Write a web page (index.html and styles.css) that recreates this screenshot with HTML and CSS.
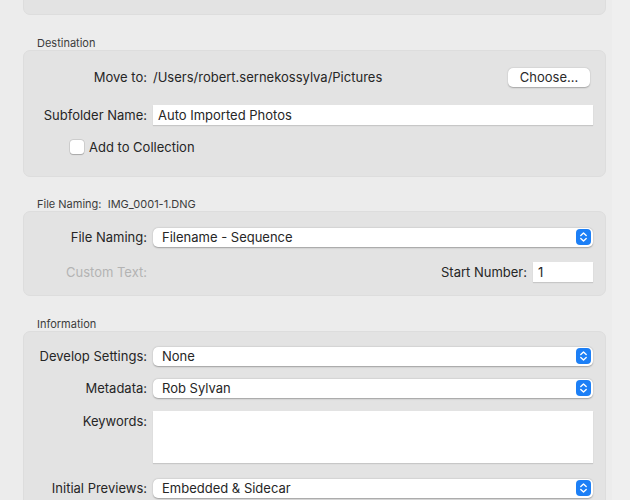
FILE: index.html
```html
<!DOCTYPE html>
<html>
<head>
<meta charset="utf-8">
<link rel="stylesheet" href="styles.css">
</head>
<body>
<div class="page">
  <div class="column">
    <div class="panel panel-top"></div>

    <div class="section-title">Destination</div>
    <div class="panel panel-dest">
      <div class="row">
        <div class="label">Move to:</div>
        <div class="field-text">/Users/robert.sernekossylva/Pictures</div>
        <button class="btn">Choose...</button>
      </div>
      <div class="row gap18">
        <div class="label">Subfolder Name:</div>
        <div class="input">Auto Imported Photos</div>
      </div>
      <div class="row gap12 check-row">
        <span class="checkbox"></span>
        <span class="check-label">Add to Collection</span>
      </div>
    </div>

    <div class="section-title title-tight">File Naming:&nbsp; IMG_0001-1.DNG</div>
    <div class="panel panel-fn">
      <div class="row">
        <div class="label">File Naming:</div>
        <div class="select"><span>Filename - Sequence</span><svg class="stepper" viewBox="0 0 15 16"><rect x="0" y="0" width="15" height="16" rx="4" fill="#1c7ff6"/><path d="M4.8 6.4 L7.5 3.9 L10.2 6.4 M4.8 9.6 L7.5 12.1 L10.2 9.6" fill="none" stroke="#fff" stroke-width="1.4" stroke-linecap="round" stroke-linejoin="round"/></svg></div>
      </div>
      <div class="row gap15">
        <div class="label disabled">Custom Text:</div>
        <div class="spacer"></div>
        <div class="label-inline">Start Number:</div>
        <div class="input small">1</div>
      </div>
    </div>

    <div class="section-title">Information</div>
    <div class="panel panel-info">
      <div class="row">
        <div class="label">Develop Settings:</div>
        <div class="select"><span>None</span><svg class="stepper" viewBox="0 0 15 16"><rect x="0" y="0" width="15" height="16" rx="4" fill="#1c7ff6"/><path d="M4.8 6.4 L7.5 3.9 L10.2 6.4 M4.8 9.6 L7.5 12.1 L10.2 9.6" fill="none" stroke="#fff" stroke-width="1.4" stroke-linecap="round" stroke-linejoin="round"/></svg></div>
      </div>
      <div class="row gap12">
        <div class="label">Metadata:</div>
        <div class="select"><span>Rob Sylvan</span><svg class="stepper" viewBox="0 0 15 16"><rect x="0" y="0" width="15" height="16" rx="4" fill="#1c7ff6"/><path d="M4.8 6.4 L7.5 3.9 L10.2 6.4 M4.8 9.6 L7.5 12.1 L10.2 9.6" fill="none" stroke="#fff" stroke-width="1.4" stroke-linecap="round" stroke-linejoin="round"/></svg></div>
      </div>
      <div class="row gap13 top-row">
        <div class="label label-top">Keywords:</div>
        <div class="textarea"></div>
      </div>
      <div class="row gap15">
        <div class="label">Initial Previews:</div>
        <div class="select"><span>Embedded &amp; Sidecar</span><svg class="stepper" viewBox="0 0 15 16"><rect x="0" y="0" width="15" height="16" rx="4" fill="#1c7ff6"/><path d="M4.8 6.4 L7.5 3.9 L10.2 6.4 M4.8 9.6 L7.5 12.1 L10.2 9.6" fill="none" stroke="#fff" stroke-width="1.4" stroke-linecap="round" stroke-linejoin="round"/></svg></div>
      </div>
    </div>
  </div>
  <div class="strip"></div>
</div>
</body>
</html>
```
FILE: styles.css
```css
html, body {
  margin: 0;
  padding: 0;
  height: 100%;
  overflow: hidden;
}
body {
  background: #ececec;
  font-family: Inter, "Noto Sans", "Liberation Sans", sans-serif;
  font-size: 13px;
  color: #262626;
}
.page {
  display: flex;
  height: 500px;
}
.column {
  width: 583px;
  padding-left: 23px;
  padding-right: 6px;
  flex: none;
}
.strip {
  flex: 1;
  background: #efefef;
}
.panel {
  background: #e3e3e3;
  border: 1px solid #dddddd;
  border-radius: 7px;
  box-sizing: border-box;
  padding: 0 12px 0 0;
}
.panel-top {
  height: 25px;
  margin-top: -10px;
}
.panel-dest {
  height: 127px;
  padding-top: 16px;
}
.panel-fn {
  height: 85px;
  padding-top: 15px;
}
.panel-info {
  height: 200px;
  padding-top: 14px;
}
.section-title {
  margin-top: 21px;
  padding-left: 14px;
  height: 14px;
  line-height: 14px;
  font-size: 11px;
  color: #3c3c3c;
}
.section-title.title-tight {
  margin-top: 20px;
}
.row {
  display: flex;
  align-items: center;
  height: 20px;
}
.gap12 { margin-top: 12px; }
.gap13 { margin-top: 13px; }
.gap15 { margin-top: 15px; }
.gap18 { margin-top: 18px; }
.label {
  width: 123px;
  flex: none;
  text-align: right;
  margin-right: 6px;
  white-space: nowrap;
}
.label.disabled {
  color: #b3b3b3;
}
.label-inline {
  margin-right: 6px;
  white-space: nowrap;
}
.spacer { flex: 1; }
.field-text {
  flex: 1;
  white-space: nowrap;
}
.btn {
  font-family: inherit;
  font-size: 13px;
  color: #2a2a2a;
  background: #ffffff;
  border: none;
  border-radius: 5px;
  box-shadow: 0 0.5px 1.5px rgba(0,0,0,0.28);
  width: 82px;
  height: 19px;
  padding: 0;
  margin-right: 3px;
  line-height: 19px;
}
.input {
  flex: 1;
  height: 20px;
  background: #ffffff;
  box-shadow: 0 1px 1px rgba(0,0,0,0.12);
  line-height: 20px;
  padding-left: 5px;
  box-sizing: border-box;
  white-space: nowrap;
}
.input.small {
  flex: none;
  width: 60px;
}
.check-row {
  padding-left: 46px;
}
.checkbox {
  width: 14px;
  height: 14px;
  border-radius: 3px;
  background: #ffffff;
  box-shadow: 0 0 0 0.5px rgba(0,0,0,0.15), 0 0.5px 1px rgba(0,0,0,0.2);
  margin-right: 5px;
  flex: none;
}
.select {
  flex: 1;
  height: 19px;
  background: #ffffff;
  border-radius: 5px;
  box-shadow: 0 0.5px 1.5px rgba(0,0,0,0.3);
  display: flex;
  align-items: center;
  justify-content: space-between;
  padding-left: 9px;
  padding-right: 2px;
}
.stepper {
  width: 15px;
  height: 16px;
  display: block;
}
.top-row {
  align-items: flex-start;
  height: 52px;
}
.label-top {
  margin-top: 2px;
  line-height: 16px;
}
.textarea {
  flex: 1;
  height: 52px;
  background: #ffffff;
  box-shadow: 0 1px 1px rgba(0,0,0,0.12);
}
```
